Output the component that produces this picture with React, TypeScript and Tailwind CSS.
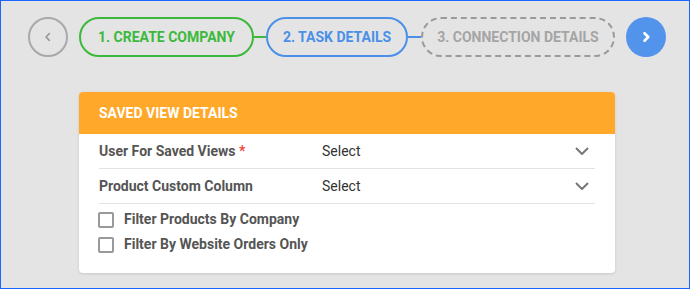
import React from 'react';

const ChevronLeft = ({ className }: { className?: string }) => (
  <svg viewBox="0 0 24 24" className={className} fill="none" stroke="currentColor" strokeWidth={2.5} strokeLinecap="round" strokeLinejoin="round">
    <path d="M14 7l-5 5 5 5" />
  </svg>
);

const ChevronRight = ({ className }: { className?: string }) => (
  <svg viewBox="0 0 24 24" className={className} fill="none" stroke="currentColor" strokeWidth={3.5} strokeLinecap="round" strokeLinejoin="round">
    <path d="M10 7l5 5-5 5" />
  </svg>
);

const ChevronDown = ({ className }: { className?: string }) => (
  <svg viewBox="0 0 14 8" className={className} fill="none" stroke="currentColor" strokeWidth={2}>
    <path d="M1 1l6 6 6-6" />
  </svg>
);

const SelectRow = ({ label, required = false }: { label: string; required?: boolean }) => (
  <div className="mx-5 flex h-[35px] items-center border-b border-[#e2e2e2]">
    <div className="w-[223px] text-[14px] font-bold text-[#555]">
      {label} {required && <span className="text-[#f0493f]">*</span>}
    </div>
    <div className="flex-1 text-[14px] text-[#333]">Select</div>
    <ChevronDown className="mr-[6px] h-[8px] w-[14px] text-[#777]" />
  </div>
);

const CheckRow = ({ label }: { label: string }) => (
  <label className="ml-[19px] flex h-[25px] items-center gap-[10px]">
    <span className="h-[16px] w-[16px] rounded-[2px] border-2 border-[#999] bg-white" />
    <span className="text-[14px] font-bold text-[#555]">{label}</span>
  </label>
);

export default function App() {
  return (
    <div className="h-[289px] w-[690px] border border-[#1a66ff] bg-[#e4e4e4] font-['Roboto',sans-serif]">
      <div className="flex items-center pl-[27px] pt-4">
        <button className="flex h-10 w-10 items-center justify-center rounded-full border-2 border-[#a9a9a9] text-[#999]">
          <ChevronLeft className="h-4 w-4" />
        </button>
        <div className="ml-[11px] flex h-10 items-center rounded-full border-2 border-[#3cb93c] px-[17px] text-[14px] font-bold text-[#3cb93c]">
          1. CREATE COMPANY
        </div>
        <div className="h-[2px] w-3 bg-[#3cb93c]" />
        <div className="flex h-10 items-center rounded-full border-2 border-[#4a8fe8] px-[15px] text-[14px] font-bold text-[#4a8fe8]">
          2. TASK DETAILS
        </div>
        <div className="h-[2px] w-[13px] bg-[#4a8fe8]" />
        <div className="flex h-10 items-center rounded-full border-2 border-dashed border-[#9a9a9a] px-[14px] text-[14px] font-bold text-[#a5a5a5]">
          3. CONNECTION DETAILS
        </div>
        <button className="ml-[11px] flex h-10 w-10 items-center justify-center rounded-full bg-[#5294ec] text-white">
          <ChevronRight className="h-[18px] w-[18px]" />
        </button>
      </div>
      <div className="ml-[78px] mt-[35px] w-[536px] overflow-hidden rounded-[4px] bg-white pb-4 shadow-[0_1px_3px_rgba(0,0,0,0.12)]">
        <div className="flex h-[42px] items-center bg-[#ffa829] px-5 text-[14px] font-bold text-white">
          SAVED VIEW DETAILS
        </div>
        <SelectRow label="User For Saved Views" required />
        <SelectRow label="Product Custom Column" />
        <div className="pt-[3px]">
          <CheckRow label="Filter Products By Company" />
          <CheckRow label="Filter By Website Orders Only" />
        </div>
      </div>
    </div>
  );
}
